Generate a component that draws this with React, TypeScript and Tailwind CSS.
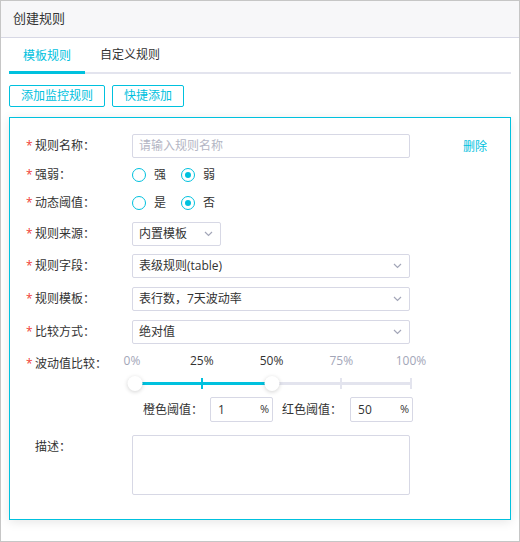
import React from 'react';

const Label: React.FC<{ text: string; required?: boolean }> = ({ text, required = true }) => (
  <div className="w-[106px] shrink-0 flex items-center text-[12px] text-[#333]">
    <span className={`w-[9px] ${required ? 'text-[#f04134]' : 'text-transparent'}`}>*</span>
    <span>{text}</span>
  </div>
);

const Chevron: React.FC = () => (
  <svg width="9" height="6" viewBox="0 0 9 6" fill="none">
    <path d="M1 1l3.5 3.5L8 1" stroke="#a3a6b8" strokeWidth="1.2" />
  </svg>
);

const Select: React.FC<{ value: string; width: string }> = ({ value, width }) => (
  <div
    className={`${width} h-[24px] border border-[#d7d8e5] rounded-[2px] flex items-center justify-between pl-[6px] pr-[7px] text-[12px] text-[#333]`}
  >
    <span>{value}</span>
    <Chevron />
  </div>
);

const Radio: React.FC<{ label: string; checked?: boolean }> = ({ label, checked }) => (
  <div className="flex items-center">
    <span className="w-[14px] h-[14px] rounded-full border border-[#00c1de] flex items-center justify-center">
      {checked && <span className="w-[6px] h-[6px] rounded-full bg-[#00c1de]" />}
    </span>
    <span className="ml-[8px] text-[12px] text-[#333]">{label}</span>
  </div>
);

const marks = [
  { label: '0%', pos: 0, active: false },
  { label: '25%', pos: 25, active: true },
  { label: '50%', pos: 50, active: true },
  { label: '75%', pos: 75, active: false },
  { label: '100%', pos: 100, active: false },
];

const Slider: React.FC = () => (
  <div className="relative w-[279px] h-[40px]">
    {marks.map((m) => (
      <span
        key={m.label}
        className={`absolute top-0 -translate-x-1/2 text-[12px] leading-[14px] ${m.active ? 'text-[#333]' : 'text-[#a3a6b8]'}`}
        style={{ left: `${m.pos}%` }}
      >
        {m.label}
      </span>
    ))}
    <div className="absolute left-0 right-0 top-[28px] h-[3px] bg-[#e3e4ee]" />
    <div className="absolute left-0 top-[28px] h-[3px] bg-[#00c1de]" style={{ width: '50%' }} />
    {[25, 75, 100].map((p) => (
      <span
        key={p}
        className={`absolute top-[24px] w-[2px] h-[11px] -translate-x-1/2 ${p <= 50 ? 'bg-[#00c1de]' : 'bg-[#e3e4ee]'}`}
        style={{ left: `${p}%` }}
      />
    ))}
    {[1.2, 50].map((p) => (
      <span
        key={p}
        className="absolute top-[22px] w-[15px] h-[15px] -translate-x-1/2 rounded-full bg-white shadow-[0_1px_4px_rgba(0,0,0,0.18)]"
        style={{ left: `${p}%` }}
      />
    ))}
  </div>
);

const PercentInput: React.FC<{ value: string }> = ({ value }) => (
  <div className="w-[63px] h-[25px] border border-[#d7d8e5] rounded-[2px] flex items-center justify-between pl-[7px] pr-[3px] text-[12px] text-[#333]">
    <span>{value}</span>
    <span className="text-[11px]">%</span>
  </div>
);

const App: React.FC = () => {
  return (
    <div
      className="w-[520px] h-[542px] border border-[#c6c6c6] bg-white flex flex-col"
      style={{ fontFamily: '"Open Sans", "Noto Sans CJK SC", sans-serif' }}
    >
      <div className="h-[37px] shrink-0 bg-[#f7f7f9] border-b border-[#d7d8e5] flex items-center pl-[12px] text-[13px] text-[#333]">
        创建规则
      </div>

      <div className="mx-[8px] h-[36px] border-b-2 border-[#e3e4ee] flex items-end">
        <div className="h-[36px] px-[14px] flex items-center text-[12px] text-[#00c1de] border-b-[3px] border-[#00c1de] -mb-[2px] pt-[2px]">
          模板规则
        </div>
        <div className="h-[36px] px-[15px] flex items-center text-[12px] text-[#333] pt-[2px]">自定义规则</div>
      </div>

      <div className="mx-[8px] mt-[11px] flex gap-[7px]">
        <button className="h-[22px] px-[11px] border border-[#00c1de] rounded-[2px] text-[12px] text-[#00c1de] leading-none">
          添加监控规则
        </button>
        <button className="h-[22px] px-[11px] border border-[#00c1de] rounded-[2px] text-[12px] text-[#00c1de] leading-none">
          快捷添加
        </button>
      </div>

      <div className="mx-[8px] mt-[10px] h-[403px] border border-[#00c1de] bg-white shadow-[0_2px_10px_rgba(0,0,0,0.1)] pl-[16px] pt-[16px] flex flex-col">
        <div className="flex items-center h-[24px]">
          <Label text="规则名称：" />
          <div className="w-[278px] h-[24px] border border-[#d7d8e5] rounded-[2px] flex items-center pl-[6px] text-[12px] text-[#b4b6c4]">
            请输入规则名称
          </div>
          <span className="ml-[53px] text-[12px] text-[#00c1de] mt-[2px]">删除</span>
        </div>

        <div className="flex items-center h-[20px] mt-[7px]">
          <Label text="强弱：" />
          <div className="flex items-center gap-[15px]">
            <Radio label="强" />
            <Radio label="弱" checked />
          </div>
        </div>

        <div className="flex items-center h-[20px] mt-[8px]">
          <Label text="动态阈值：" />
          <div className="flex items-center gap-[15px]">
            <Radio label="是" />
            <Radio label="否" checked />
          </div>
        </div>

        <div className="flex items-center mt-[9px]">
          <Label text="规则来源：" />
          <Select value="内置模板" width="w-[89px]" />
        </div>

        <div className="flex items-center mt-[8px]">
          <Label text="规则字段：" />
          <Select value="表级规则(table)" width="w-[278px]" />
        </div>

        <div className="flex items-center mt-[9px]">
          <Label text="规则模板：" />
          <Select value="表行数，7天波动率" width="w-[278px]" />
        </div>

        <div className="flex items-center mt-[9px]">
          <Label text="比较方式：" />
          <Select value="绝对值" width="w-[278px]" />
        </div>

        <div className="flex mt-[10px]">
          <div className="pt-[1px]">
            <Label text="波动值比较：" />
          </div>
          <div className="flex flex-col">
            <Slider />
            <div className="flex items-center pl-[11px] mt-[3px] text-[12px] text-[#333]">
              <span>橙色阈值：</span>
              <span className="ml-[7px]"><PercentInput value="1" /></span>
              <span className="ml-[9px]">红色阈值：</span>
              <span className="ml-[8px]"><PercentInput value="50" /></span>
            </div>
          </div>
        </div>

        <div className="flex mt-[13px]">
          <div className="pt-[3px]">
            <Label text="描述：" required={false} />
          </div>
          <div className="w-[278px] h-[60px] border border-[#d7d8e5] rounded-[2px]" />
        </div>
      </div>
    </div>
  );
};

export default App;
